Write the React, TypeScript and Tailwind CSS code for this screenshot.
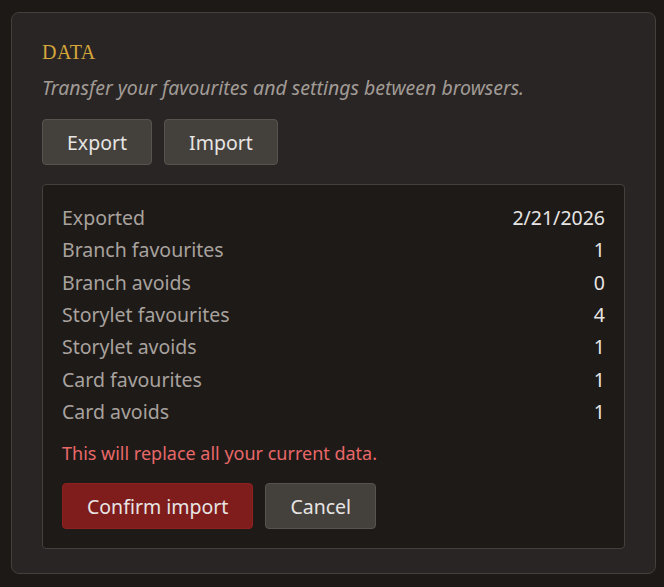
const rows: [string, string][] = [
  ["Exported", "2/21/2026"],
  ["Branch favourites", "1"],
  ["Branch avoids", "0"],
  ["Storylet favourites", "4"],
  ["Storylet avoids", "1"],
  ["Card favourites", "1"],
  ["Card avoids", "1"],
];

export default function App() {
  return (
    <div className="min-h-[587px] bg-[#1c1917] pt-3 pb-3 pl-[11px] pr-2 font-['Noto_Sans',sans-serif] text-[19.5px] leading-[27px]">
      <section className="rounded-lg border border-[#44403c] bg-[#292524] px-[30px] pt-[26px] pb-6">
        <h2 className="font-['Liberation_Serif',serif] text-[20px] leading-[27px] tracking-wide text-[#d4a63c]">
          DATA
        </h2>
        <p className="mt-2 italic text-[#a19b96]">
          Transfer your favourites and settings between browsers.
        </p>

        <div className="mt-[18px] flex gap-3">
          <button className="rounded border border-[#57534e] bg-[#44403c] px-6 py-[8.5px] leading-[27px] text-[#e7e5e4]">
            Export
          </button>
          <button className="rounded border border-[#57534e] bg-[#44403c] px-6 py-[8.5px] leading-[27px] text-[#e7e5e4]">
            Import
          </button>
        </div>

        <div className="mt-[19px] rounded border border-[#44403c] bg-[#1e1a18] p-[19px]">
          <div className="flex flex-col gap-[5.35px]">
            {rows.map(([label, value]) => (
              <div key={label} className="flex justify-between">
                <span className="text-[#a8a29e]">{label}</span>
                <span className="text-[#e7e5e4]">{value}</span>
              </div>
            ))}
          </div>

          <p className="mt-[15px] text-[18px] text-[#e86868]">This will replace all your current data.</p>

          <div className="mt-[16px] flex gap-3">
            <button className="rounded border border-[#8f2020] bg-[#7f1d1d] px-6 py-[8.5px] leading-[27px] text-[#e7e5e4]">
              Confirm import
            </button>
            <button className="rounded border border-[#57534e] bg-[#44403c] px-6 py-[8.5px] leading-[27px] text-[#e7e5e4]">
              Cancel
            </button>
          </div>
        </div>
      </section>
    </div>
  );
}
